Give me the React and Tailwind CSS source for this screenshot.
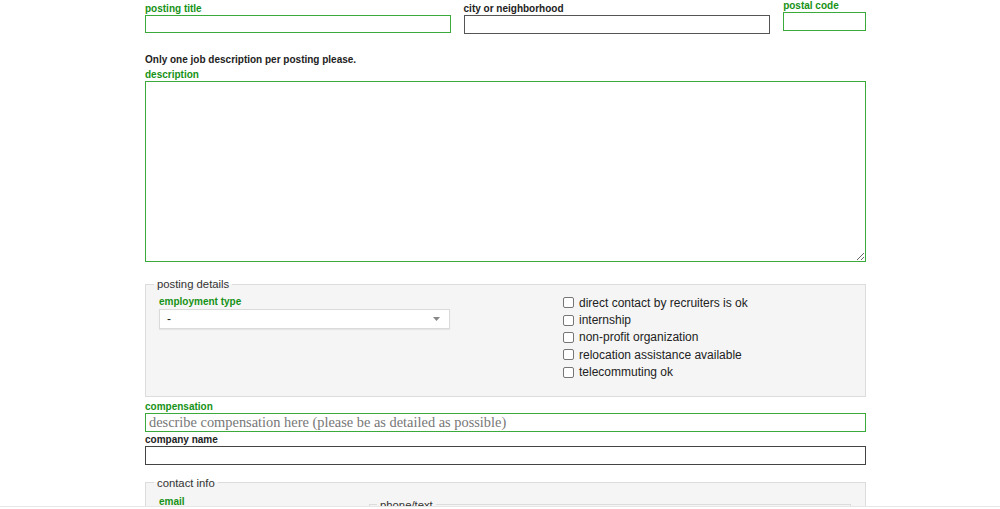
import { useState } from 'react';

const font = { fontFamily: '"Liberation Sans", Arial, sans-serif' };

function Label({ children, required }) {
  return (
    <div
      className={`text-[10px] leading-[12px] font-bold ${
        required ? 'text-[#169216]' : 'text-[#222]'
      }`}
    >
      {children}
    </div>
  );
}

function Checkbox({ label }) {
  const [checked, setChecked] = useState(false);
  return (
    <label className="flex items-center gap-[5px] h-[17.4px] text-[12px] text-[#222] cursor-pointer">
      <span
        onClick={() => setChecked(!checked)}
        className={`w-[11px] h-[11px] border border-[#767676] rounded-[2px] ${
          checked ? 'bg-[#0075ff]' : 'bg-white'
        }`}
      />
      {label}
    </label>
  );
}

export default function App() {
  const flags = [
    'direct contact by recruiters is ok',
    'internship',
    'non-profit organization',
    'relocation assistance available',
    'telecommuting ok',
  ];

  return (
    <div className="h-[509px] overflow-hidden bg-white" style={font}>
      <div className="h-[507px] overflow-hidden border-b border-[#e6e6e6]">
        <div className="w-[721px] ml-[145px] pt-[3px]">
          {/* title / city / postal row */}
          <div className="flex gap-[13px]">
            <div className="w-[306px]">
              <Label required>posting title</Label>
              <input className="block w-full h-[18px] border border-[#3aab3a] outline-none px-1 text-[12px]" />
            </div>
            <div className="w-[307px]">
              <Label>city or neighborhood</Label>
              <input className="block w-full h-[19px] border border-[#555] outline-none px-1 text-[12px]" />
            </div>
            <div className="w-[83px] -mt-[3px]">
              <Label required>postal code</Label>
              <input className="block w-full h-[19px] border border-[#3aab3a] outline-none px-1 text-[12px]" />
            </div>
          </div>

          <div className="mt-[20px] text-[10px] leading-[12px] font-bold text-[#222]">
            Only one job description per posting please.
          </div>
          <div className="mt-[3px]">
            <Label required>description</Label>
          </div>
          <textarea className="block w-full h-[181px] border border-[#3aab3a] outline-none p-1 text-[12px]" />

          {/* posting details */}
          <fieldset className="mt-[15px] border border-[#dcdcdc] bg-[#f5f5f5] px-[13px] pt-[3px] pb-[15px]">
            <legend className="-ml-[5px] px-[3px] text-[11.3px] leading-[14px] text-[#333]">
              posting details
            </legend>
            <div className="flex">
              <div className="w-[404px] pt-[2px]">
                <Label required>employment type</Label>
                <div className="mt-[1px] w-[291px] h-[20px] bg-white border border-[#dadada] shadow-[0_1px_1px_rgba(0,0,0,0.06)] flex items-center justify-between pl-[7px] pr-[9px] text-[12px] text-[#222]">
                  <span>-</span>
                  <svg width="7" height="4" viewBox="0 0 7 4">
                    <path d="M0 0h7L3.5 4z" fill="#888" />
                  </svg>
                </div>
              </div>
              <div className="flex flex-col">
                {flags.map((f) => (
                  <Checkbox key={f} label={f} />
                ))}
              </div>
            </div>
          </fieldset>

          <div className="mt-[4px]">
            <Label required>compensation</Label>
          </div>
          <input
            placeholder="describe compensation here (please be as detailed as possible)"
            className="block w-full h-[19px] border border-[#3aab3a] outline-none px-[3px] text-[14.4px] placeholder:text-[#777]"
            style={{ fontFamily: '"Liberation Serif", "Times New Roman", serif' }}
          />
          <div className="mt-[2px]">
            <Label>company name</Label>
          </div>
          <input className="block w-full h-[19px] border border-[#444] outline-none px-1 text-[12px]" />

          {/* contact info */}
          <fieldset className="mt-[11px] border border-[#dcdcdc] bg-[#f5f5f5] px-[13px] pt-[6px] pb-[14px]">
            <legend className="-ml-[5px] px-[3px] text-[11.3px] leading-[14px] text-[#333]">
              contact info
            </legend>
            <div className="flex">
              <div className="w-[210px]">
                <Label required>email</Label>
                <input className="block w-[180px] h-[19px] border border-[#3aab3a] outline-none px-1 text-[12px]" />
              </div>
              <fieldset className="mt-[2px] flex-1 mr-[1px] border border-[#dcdcdc] px-[10px] pt-[3px] pb-[10px]">
                <legend className="-ml-[3px] px-[3px] text-[11.3px] leading-[14px] text-[#333]">
                  phone/text
                </legend>
                <div className="h-[60px]" />
              </fieldset>
            </div>
          </fieldset>
        </div>
      </div>
    </div>
  );
}
